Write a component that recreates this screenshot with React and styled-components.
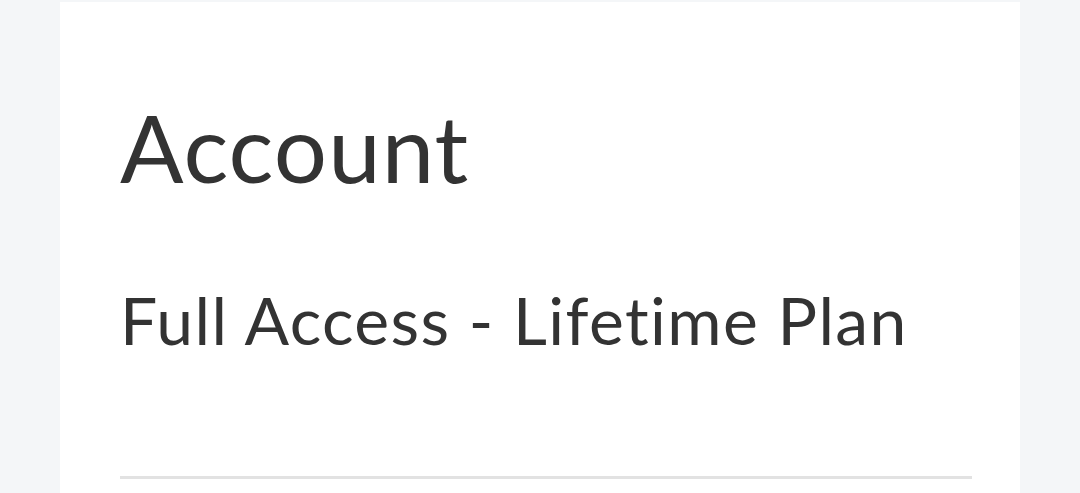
import React from 'react';
import styled, { createGlobalStyle } from 'styled-components';

const GlobalStyle = createGlobalStyle`
  html, body {
    margin: 0;
    padding: 0;
    background: #f4f6f8;
    height: 100%;
  }
  body {
    font-family: Lato, "Open Sans", sans-serif;
    color: #333;
    font-variant-ligatures: none;
  }
`;

const Page = styled.div`
  padding: 2px 60px 0;
  height: 493px;
  box-sizing: border-box;
  overflow: hidden;
`;

const Card = styled.div`
  background: #fff;
  height: 100%;
  padding: 98px 48px 0 60px;
  box-sizing: border-box;
`;

const Title = styled.h1`
  margin: 0;
  font-size: 94px;
  font-weight: 400;
  line-height: 1;
  letter-spacing: 1.1px;
  color: #333;
`;

const Plan = styled.p`
  margin: 93px 0 0;
  font-size: 66px;
  font-weight: 400;
  line-height: 1;
  letter-spacing: 1.4px;
  color: #333;
`;

const Divider = styled.hr`
  margin: 123px 0 0;
  border: 0;
  height: 3px;
  background: #e2e2e2;
`;

export default function App() {
  return (
    <>
      <GlobalStyle />
      <Page>
        <Card>
          <Title>Account</Title>
          <Plan>Full Access - Lifetime Plan</Plan>
          <Divider />
        </Card>
      </Page>
    </>
  );
}
